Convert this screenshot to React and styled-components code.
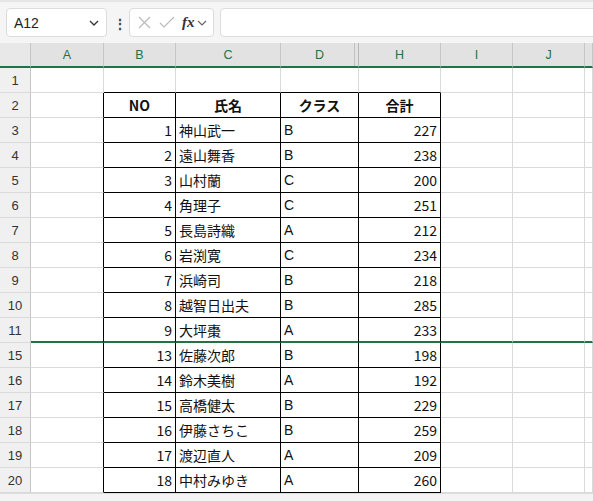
import React from "react";
import styled, { createGlobalStyle } from "styled-components";

const G = createGlobalStyle`
  body { margin:0; background:#fff; font-family:"Noto Sans CJK JP","Noto Sans",sans-serif; overflow:hidden; }
`;
const Top = styled.div`
  height:43px; background:#f5f5f5; border-top:2px solid #e6e6e6; box-sizing:border-box;
  display:flex; align-items:center; gap:6px; padding:0 0 0 6px;
`;
const Box = styled.div`
  height:29px; box-sizing:border-box; background:#fff; border:1px solid #dcdcdc; border-radius:4px;
  display:flex; align-items:center; width:${p=>p.w}; flex:${p=>p.grow?1:"none"};
  margin-right:${p=>p.grow?"-4px":"0"}; color:#b0b0b0;
`;
const NameText = styled.span`flex:1; padding-left:7px; font-family:"Liberation Sans",sans-serif; font-size:14px; color:#222;`;
const Dots = styled.span`font-size:14px; color:#444; width:10px; text-align:center; font-weight:bold;`;
const Fx = styled.span`font-family:"Liberation Serif",serif; font-style:italic; font-weight:bold; color:#333; font-size:15px; margin-left:4px;`;
const Sheet = styled.div`
  display:grid; grid-template-columns:31px 73px 72px 105px 78px 82px 72px 72px 1fr;
  position:relative;
`;
const ColHead = styled.div`
  height:23px; background:#e2e2e2; color:#217346; font-family:"Liberation Sans",sans-serif; font-size:12.5px;
  display:flex; align-items:center; justify-content:center; border-right:1px solid ${p=>p.dbl?"#b8b8b8":"#c6c6c6"};
  box-shadow:${p=>p.dbl?"inset -3px 0 0 #e2e2e2, inset -4px 0 0 #c0c0c0":"none"};
  border-bottom:2px solid #217346;
`;
const Corner = styled(ColHead)`background:#e8e8e8; border-bottom:2px solid #217346;`;
const RowHead = styled.div`
  height:25px; box-sizing:border-box; background:#f0f0f0; color:#333; font-family:"Liberation Sans",sans-serif; font-size:13px;
  display:flex; align-items:center; justify-content:center; border-right:1px solid #c6c6c6; border-bottom:1px solid #dadada;
`;
const Cell = styled.div`
  height:25px; box-sizing:border-box; display:flex; align-items:center; padding:0 3px;
  justify-content:${p=>p.al==="r"?"flex-end":p.al==="c"?"center":"flex-start"};
  font-weight:${p=>p.bold?700:400}; font-size:14px; color:#111;
  border-right:1px solid ${p=>p.dR?"#000":"#dadada"};
  border-bottom:1px solid ${p=>p.dB?"#000":"#dadada"};
  border-left:${p=>p.first?"1px solid #000":"none"};
  margin-left:${p=>p.first?"-1px":"0"};
  ${p=>p.green?"border-bottom:2px solid #217346;":""}
`;
const Scroll = styled.div`height:10px; background:#f3f3f3; border-top:1px solid #ddd;`;

const data = [
  [1,"神山武一","B",227],[2,"遠山舞香","B",238],[3,"山村蘭","C",200],[4,"角理子","C",251],
  [5,"長島詩織","A",212],[6,"岩渕寛","C",234],[7,"浜崎司","B",218],[8,"越智日出夫","B",285],[9,"大坪棗","A",233],
  [13,"佐藤次郎","B",198],[14,"鈴木美樹","A",192],[15,"高橋健太","B",229],[16,"伊藤さちこ","B",259],
  [17,"渡辺直人","A",209],[18,"中村みゆき","A",260],
];
const rowNums=[3,4,5,6,7,8,9,10,11,15,16,17,18,19,20];

export default function App(){
  return <>
    <G/>
    <Top>
      <Box w="101px"><NameText>A12</NameText><svg width="20" height="12" viewBox="0 0 20 12"><path d="M4 4l4 4 4-4" stroke="#333" fill="none" strokeWidth="1.3"/></svg></Box>
      <Dots>⋮</Dots>
      <Box w="85px">
        <svg width="22" height="16" viewBox="0 0 22 16" style={{marginLeft:4}}><path d="M5 2l11 11M16 2L5 13" stroke="#bbb" strokeWidth="1.2"/></svg>
        <svg width="22" height="16" viewBox="0 0 22 16"><path d="M4 8l4 4 10-10" stroke="#bbb" fill="none" strokeWidth="1.2"/></svg>
        <Fx>fx</Fx>
        <svg width="14" height="12" viewBox="0 0 14 12"><path d="M3 4l4 4 4-4" stroke="#666" fill="none" strokeWidth="1.2"/></svg>
      </Box>
      <Box grow/>
    </Top>
    <Sheet>
      <Corner/>
      {["A","B","C","D","H","I","J",""].map((c,i)=><ColHead key={i} dbl={c==="D"}>{c}</ColHead>)}
      <RowHead>1</RowHead>
      {Array.from({length:8}).map((_,i)=><Cell key={i} dB={i>=1&&i<=4}/>)}
      <RowHead>2</RowHead>
      <Cell dR/>
      <Cell bold al="c" dR dB>NO</Cell><Cell bold al="c" dR dB>氏名</Cell><Cell bold al="c" dR dB>クラス</Cell><Cell bold al="c" dR dB>合計</Cell>
      <Cell/><Cell/><Cell/>
      {data.map((d,i)=>{
        const g=i===8;
        return <React.Fragment key={i}>
          <RowHead>{rowNums[i]}</RowHead>
          <Cell dR green={g}/>
          <Cell al="r" dR dB green={g}>{d[0]}</Cell>
          <Cell dR dB green={g}>{d[1]}</Cell>
          <Cell dR dB green={g} style={{fontFamily:"'Liberation Sans',sans-serif"}}>{d[2]}</Cell>
          <Cell al="r" dR dB green={g}>{d[3]}</Cell>
          <Cell green={g}/><Cell green={g}/><Cell green={g}/>
        </React.Fragment>;
      })}
    </Sheet>
    <Scroll/>
  </>;
}
